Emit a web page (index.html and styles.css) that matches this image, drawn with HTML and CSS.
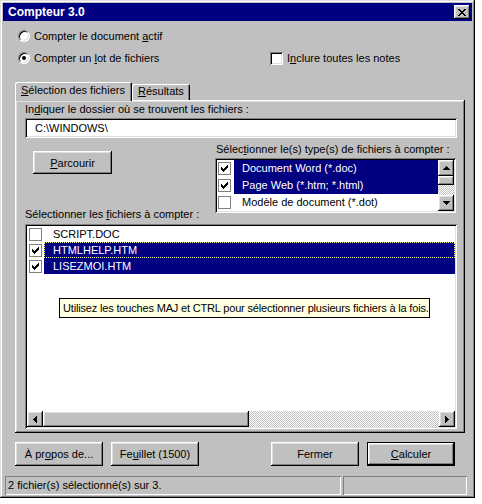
FILE: index.html
```html
<!DOCTYPE html>
<html lang="fr">
<head>
<meta charset="utf-8">
<title>Compteur 3.0</title>
<link rel="stylesheet" href="styles.css">
</head>
<body>
<div class="win">
  <div class="titlebar">
    <span class="title">Compteur 3.0</span>
    <span class="close raised"><svg width="8" height="7" viewBox="0 0 8 7"><path d="M0 0h2v1h-2z M6 0h2v1h-2z M1 1h2v1h-2z M5 1h2v1h-2z M2 2h4v1h-4z M3 3h2v1h-2z M2 4h4v1h-4z M1 5h2v1h-2z M5 5h2v1h-2z M0 6h2v1h-2z M6 6h2v1h-2z" fill="#000"/></svg></span>
  </div>

  <div class="opts">
    <div class="opt"><span class="rb"></span><span>Compter le document <u>a</u>ctif</span></div>
    <div class="opt-empty"></div>
    <div class="opt"><span class="rb on"></span><span>Compter un <u>l</u>ot de fichiers</span></div>
    <div class="opt"><span class="cb3d"></span><span>I<u>n</u>clure toutes les notes</span></div>
  </div>

  <div class="tabs">
    <div class="tab active"><u>S</u>élection des fichiers</div>
    <div class="tab"><u>R</u>ésultats</div>
  </div>

  <div class="panel">
    <div class="lbl">In<u>d</u>iquer le dossier où se trouvent les fichiers :</div>
    <div class="field sunken">C:\WINDOWS\</div>

    <div class="mid">
      <div class="midleft">
        <div class="btn browse raised"><u>P</u>arcourir</div>
        <div class="lbl">Sélectionner les <u>f</u>ichiers à compter :</div>
      </div>
      <div class="midright">
        <div class="lbl">Sélec<u>t</u>ionner le(s) type(s) de fichiers à compter :</div>
        <div class="typelist sunken">
          <div class="items">
            <div class="row"><span class="cb"><svg width="7" height="7" viewBox="0 0 7 7"><path class="ck" d="M6 0h1v1h-1z M5 1h2v1h-2z M0 2h1v1h-1z M4 2h3v1h-3z M0 3h2v1h-2z M3 3h3v1h-3z M0 4h5v1h-5z M1 5h3v1h-3z M2 6h1v1h-1z"/></svg></span><span class="txt sel">Document Word (*.doc)</span></div>
            <div class="row"><span class="cb"><svg width="7" height="7" viewBox="0 0 7 7"><path class="ck" d="M6 0h1v1h-1z M5 1h2v1h-2z M0 2h1v1h-1z M4 2h3v1h-3z M0 3h2v1h-2z M3 3h3v1h-3z M0 4h5v1h-5z M1 5h3v1h-3z M2 6h1v1h-1z"/></svg></span><span class="txt sel">Page Web (*.htm; *.html)</span></div>
            <div class="row"><span class="cb"></span><span class="txt">Modèle de document (*.dot)</span></div>
          </div>
          <div class="vscroll">
            <span class="sbtn raised"><svg width="7" height="4" viewBox="0 0 7 4"><path d="M3 0h1v1h-1z M2 1h3v1h-3z M1 2h5v1h-5z M0 3h7v1h-7z"/></svg></span>
            <span class="vthumb raised"></span>
            <span class="vtrack dither"></span>
            <span class="sbtn raised"><svg width="7" height="4" viewBox="0 0 7 4"><path d="M0 0h7v1h-7z M1 1h5v1h-5z M2 2h3v1h-3z M3 3h1v1h-1z"/></svg></span>
          </div>
        </div>
      </div>
    </div>

    <div class="filelist sunken">
      <div class="fitems">
        <div class="frow"><span class="cb"></span><span class="ftxt">SCRIPT.DOC</span></div>
        <div class="frow"><span class="cb"><svg width="7" height="7" viewBox="0 0 7 7"><path class="ck" d="M6 0h1v1h-1z M5 1h2v1h-2z M0 2h1v1h-1z M4 2h3v1h-3z M0 3h2v1h-2z M3 3h3v1h-3z M0 4h5v1h-5z M1 5h3v1h-3z M2 6h1v1h-1z"/></svg></span><span class="ftxt sel focus">HTMLHELP.HTM</span></div>
        <div class="frow"><span class="cb"><svg width="7" height="7" viewBox="0 0 7 7"><path class="ck" d="M6 0h1v1h-1z M5 1h2v1h-2z M0 2h1v1h-1z M4 2h3v1h-3z M0 3h2v1h-2z M3 3h3v1h-3z M0 4h5v1h-5z M1 5h3v1h-3z M2 6h1v1h-1z"/></svg></span><span class="ftxt sel">LISEZMOI.HTM</span></div>
      </div>
      <div class="hscroll">
        <span class="sbtn raised"><svg width="4" height="7" viewBox="0 0 4 7"><path d="M3 0h1v7h-1z M2 1h1v5h-1z M1 2h1v3h-1z M0 3h1v1h-1z"/></svg></span>
        <span class="hthumb raised"></span>
        <span class="htrack dither"></span>
        <span class="sbtn raised"><svg width="4" height="7" viewBox="0 0 4 7"><path d="M0 0h1v7h-1z M1 1h1v5h-1z M2 2h1v3h-1z M3 3h1v1h-1z"/></svg></span>
      </div>
      <div class="tooltip">Utilisez les touches MAJ et CTRL pour sélectionner plusieurs fichiers à la fois.</div>
    </div>
  </div>

  <div class="buttons">
    <div class="btn raised">À pr<u>o</u>pos de...</div>
    <div class="btn raised">Fe<u>u</u>illet (1500)</div>
    <div class="btn raised close-btn">Fermer</div>
    <div class="btn default"><u>C</u>alculer</div>
  </div>

  <div class="status">
    <div class="spanel main">2 fichier(s) sélectionné(s) sur 3.</div>
    <div class="spanel extra"></div>
  </div>
</div>
</body>
</html>
```

FILE: styles.css
```css
* { box-sizing: border-box; }
html, body { margin: 0; padding: 0; background: #fff; }
body {
  font-family: "Liberation Sans", Arial, sans-serif;
  font-size: 11px;
  color: #000;
}
u { text-decoration: underline; text-underline-offset: 1px; }

.win {
  width: 475px;
  height: 498px;
  background: #c0c0c0;
  padding: 3px;
  box-shadow: inset -1px -1px #000, inset 1px 1px #dfdfdf, inset -2px -2px #808080, inset 2px 2px #fff;
}

.raised {
  background: #c0c0c0;
  box-shadow: inset -1px -1px #000, inset 1px 1px #fff, inset -2px -2px #808080, inset 2px 2px #dfdfdf;
}
.sunken {
  background: #fff;
  box-shadow: inset 1px 1px #808080, inset -1px -1px #fff, inset 2px 2px #000, inset -2px -2px #dfdfdf;
}
.dither {
  background: repeating-conic-gradient(#fff 0 25%, #c0c0c0 0 50%) 0 0 / 2px 2px;
}

/* title */
.titlebar {
  height: 18px;
  background: #000080;
  display: flex;
  align-items: center;
  padding-left: 5px;
  padding-right: 2px;
}
.title { color: #fff; font-weight: bold; font-size: 12px; flex: 1; }
.close {
  width: 16px; height: 14px;
  display: flex; align-items: center; justify-content: center;
  padding-right: 1px;
}
.close svg { display: block; }

/* options */
.opts {
  height: 61px;
  padding: 7px 0 0 15px;
  display: grid;
  grid-template-columns: 252px auto;
  grid-auto-rows: 16px;
  row-gap: 6px;
}
.opt { display: flex; align-items: center; gap: 4px; white-space: nowrap; }
.rb {
  width: 12px; height: 12px; border-radius: 50%;
  background: #fff;
  border: 1px solid; border-color: #808080 #fff #fff #808080;
  box-shadow: inset 1px 1px #000, inset -1px -1px #dfdfdf;
  position: relative;
  flex: none;
}
.rb.on::after {
  content: ""; position: absolute; left: 3px; top: 3px;
  width: 4px; height: 4px; border-radius: 50%; background: #000;
}
.cb3d {
  width: 13px; height: 13px; flex: none;
  background: #fff;
  box-shadow: inset 1px 1px #808080, inset -1px -1px #fff, inset 2px 2px #000, inset -2px -2px #dfdfdf;
}

/* tabs */
.tabs {
  height: 18px;
  margin-left: 12px;
  display: flex;
  align-items: flex-end;
}
.tab {
  height: 16px;
  padding: 0 6px;
  line-height: 15px;
  background: #c0c0c0;
  border-top-left-radius: 2px;
  border-top-right-radius: 2px;
  box-shadow: inset 1px 1px #fff, inset -1px 0 #000, inset -2px 0 #808080;
}
.tab.active {
  height: 19px;
  margin-bottom: -1px;
  padding: 0 7px 0 6px;
  line-height: 17px;
  position: relative;
  z-index: 1;
}

/* panel */
.panel {
  margin-left: 12px;
  width: 450px;
  height: 333px;
  padding: 2px 0 0 10px;
  box-shadow: inset -1px -1px #000, inset 1px 1px #fff, inset -2px -2px #808080, inset 2px 2px #dfdfdf;
}
.lbl { height: 14px; line-height: 14px; white-space: nowrap; }
.field {
  margin-top: 2px;
  width: 432px;
  height: 20px;
  line-height: 20px;
  padding-left: 10px;
}

.mid { display: flex; height: 83px; }
.midleft {
  width: 190px;
  display: flex; flex-direction: column; justify-content: space-between;
}
.btn.browse { margin: 13px 0 0 8px; width: 79px; height: 23px; }
.midright { margin-top: 4px; width: 241px; }
.midright .lbl { padding-left: 1px; }

.typelist {
  margin-top: 2px;
  height: 55px;
  padding: 2px;
  display: flex;
}
.items { flex: 1; padding-top: 0; }
.row { height: 17px; display: flex; align-items: center; }
.cb {
  width: 13px; height: 13px; flex: none;
  border: 1px solid #808080;
  background: #fff;
  display: flex; align-items: center; justify-content: center;
  margin-left: 1px;
}
.cb svg { display: block; }
.ck { fill: #000; }
.txt { height: 17px; line-height: 17px; margin-left: 3px; padding: 0 8px; flex: 1; }
.sel { background: #000080; color: #fff; }

.vscroll { width: 16px; display: flex; flex-direction: column; }
.sbtn {
  width: 16px; height: 16px; flex: none;
  display: flex; align-items: center; justify-content: center;
}
.sbtn svg { display: block; }
.vthumb { height: 9px; }
.vtrack { flex: 1; }

/* file list */
.filelist {
  margin-top: 3px;
  width: 432px;
  height: 205px;
  padding: 2px;
  display: flex;
  flex-direction: column;
  position: relative;
}
.fitems { flex: 1; }
.frow { height: 16px; display: flex; align-items: center; }
.frow .cb { margin-left: 2px; }
.ftxt { height: 16px; line-height: 16px; margin-left: 2px; padding-left: 9px; flex: 1; }
.focus { outline: 1px dotted #ffff80; outline-offset: -1px; }

.hscroll { height: 16px; display: flex; }
.hthumb { width: 206px; height: 16px; }
.htrack { flex: 1; }

.tooltip {
  position: absolute;
  left: 34px; top: 74px;
  width: 371px; height: 20px;
  background: #ffffe1;
  border: 1px solid #000;
  line-height: 18px;
  padding-left: 3px;
  white-space: nowrap;
  letter-spacing: -0.17px;
}

/* bottom buttons */
.buttons {
  margin: 9px 0 0 12px;
  display: flex;
  gap: 8px;
  height: 24px;
}
.btn {
  width: 88px; height: 24px;
  display: flex; align-items: center; justify-content: center;
  white-space: nowrap;
}
.close-btn { margin-left: 64px; }
.btn.default {
  background: #c0c0c0;
  box-shadow: inset 0 0 0 1px #000, inset -2px -2px #000, inset 2px 2px #fff, inset -3px -3px #808080, inset 3px 3px #dfdfdf;
}

/* status */
.status {
  margin-top: 10px;
  height: 19px;
  display: flex;
  gap: 2px;
  padding-left: 2px;
}
.spanel {
  height: 19px;
  line-height: 18px;
  box-shadow: inset 1px 1px #808080, inset -1px -1px #fff;
  white-space: nowrap;
}
.spanel.main { width: 336px; padding-left: 3px; }
.spanel.extra { width: 124px; }
```
